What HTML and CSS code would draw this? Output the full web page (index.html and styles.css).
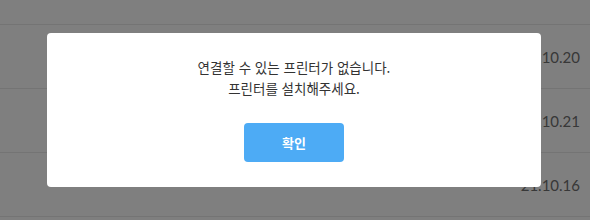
FILE: index.html
```html
<!DOCTYPE html>
<html lang="ko">
<head>
<meta charset="utf-8">
<link rel="stylesheet" href="styles.css">
</head>
<body>
<ul class="list">
  <li class="row"></li>
  <li class="row"><span class="date">21.10.20</span></li>
  <li class="row"><span class="date">21.10.21</span></li>
  <li class="row"><span class="date">21.10.16</span></li>
</ul>
<div class="overlay">
  <div class="modal">
    <p class="message">연결할 수 있는 프린터가 없습니다.<br>프린터를 설치해주세요.</p>
    <button class="btn" type="button">확인</button>
  </div>
</div>
</body>
</html>
```
FILE: styles.css
```css
html, body {
  margin: 0;
  padding: 0;
  height: 100%;
  overflow: hidden;
  background: #ffffff;
  font-family: Lato, "Noto Sans CJK KR", sans-serif;
}
.list {
  list-style: none;
  margin: -39px 0 0;
  padding: 0;
}
.row {
  box-sizing: border-box;
  height: 64px;
  border-bottom: 1px solid #e8e8e8;
  display: flex;
  align-items: center;
  justify-content: flex-end;
  padding-right: 10px;
}
.date {
  font-size: 15px;
  color: #707070;
}
.overlay {
  position: fixed;
  inset: 0;
  background: rgba(0, 0, 0, 0.5);
  display: flex;
  align-items: center;
  justify-content: center;
}
.modal {
  box-sizing: border-box;
  width: 494px;
  margin-right: 2px;
  background: #ffffff;
  border-radius: 4px;
  padding: 24px 0 25px;
  display: flex;
  flex-direction: column;
  align-items: center;
}
.message {
  margin: 0;
  text-align: center;
  font-family: "Noto Sans CJK KR", sans-serif;
  font-size: 13.5px;
  line-height: 21px;
  color: #333333;
}
.btn {
  margin-top: 24px;
  width: 100px;
  height: 39px;
  border: 0;
  border-radius: 4px;
  background: #4dabf5;
  color: #ffffff;
  font-family: "Noto Sans CJK KR", sans-serif;
  font-weight: 700;
  font-size: 13px;
  padding: 0;
}
```
